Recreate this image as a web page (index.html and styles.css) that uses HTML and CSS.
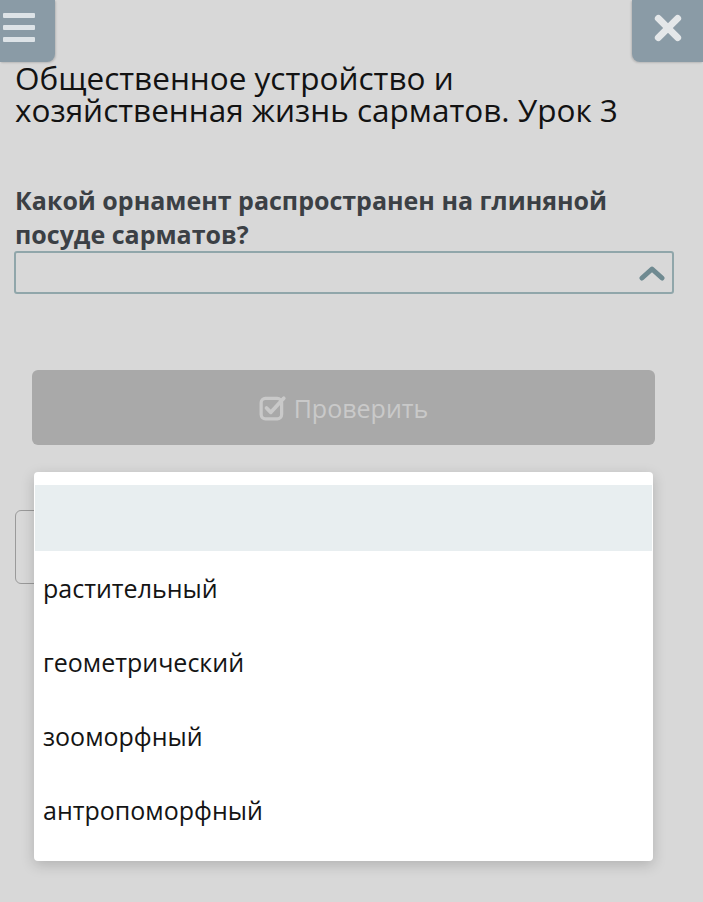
FILE: index.html
```html
<!DOCTYPE html>
<html lang="ru">
<head>
<meta charset="utf-8">
<link rel="stylesheet" href="styles.css">
</head>
<body>
<div class="page">
  <header class="topbar">
    <button class="menu-btn" aria-label="menu">
      <span></span><span></span><span></span>
    </button>
    <button class="close-btn" aria-label="close">
      <svg width="28" height="28" viewBox="0 0 28 28"><path d="M5 5 L23 23 M23 5 L5 23" stroke="#e4e7e9" stroke-width="6.5" stroke-linecap="round"/></svg>
    </button>
  </header>
  <h1 class="title">Общественное устройство и хозяйственная жизнь сарматов. Урок 3</h1>
  <p class="question">Какой орнамент распространен на глиняной посуде сарматов?</p>
  <div class="select">
    <svg class="chev" width="26" height="16" viewBox="0 0 26 16"><path d="M3 13 L13 4 L23 13" fill="none" stroke="#6f8a91" stroke-width="5" stroke-linecap="round" stroke-linejoin="round"/></svg>
  </div>
  <div class="actions">
    <button class="check-btn">
      <svg width="28" height="26" viewBox="0 0 26 24"><rect x="2" y="3" width="19" height="19" rx="4" fill="none" stroke="#c9c9c9" stroke-width="3"/><path d="M7 12 L11 16 L23 3" fill="none" stroke="#c9c9c9" stroke-width="3.5" stroke-linecap="round" stroke-linejoin="round"/></svg>
      <span>Проверить</span>
    </button>
  </div>
  <div class="below">
    <div class="ghost-box"></div>
    <ul class="dropdown">
      <li class="opt active"></li>
      <li class="opt">растительный</li>
      <li class="opt">геометрический</li>
      <li class="opt">зооморфный</li>
      <li class="opt">антропоморфный</li>
    </ul>
  </div>
</div>
</body>
</html>
```
FILE: styles.css
```css
html, body {
  margin: 0;
  padding: 0;
  background: #d8d8d8;
}
body {
  font-family: "Open Sans", "DejaVu Sans", sans-serif;
  color: #141414;
  width: 703px;
  height: 902px;
  overflow: hidden;
}
.page {
  position: relative;
}
.topbar {
  display: flex;
  justify-content: space-between;
  height: 62px;
}
.menu-btn {
  width: 55px;
  height: 62px;
  border: none;
  background: #8a9ba6;
  border-bottom-right-radius: 8px;
  padding: 13px 20px 0 3px;
  display: flex;
  flex-direction: column;
  gap: 7px;
  box-shadow: 1px 1px 2px rgba(0,0,0,0.15);
}
.menu-btn span {
  display: block;
  height: 5px;
  background: #dde3e7;
  border-radius: 1px;
}
.close-btn {
  width: 71px;
  height: 62px;
  border: none;
  background: #8a9ba6;
  border-bottom-left-radius: 8px;
  display: flex;
  align-items: center;
  justify-content: center;
  padding: 0 0 6px 0;
  box-shadow: -1px 1px 2px rgba(0,0,0,0.15);
}
.close-btn svg {
  width: 30px;
  height: 30px;
}
.title {
  margin: 0 0 0 15px;
  font-size: 31.5px;
  font-weight: 400;
  line-height: 32px;
  color: #121212;
  width: 660px;
}
.question {
  margin: 57px 0 0 15px;
  font-size: 25px;
  font-weight: 700;
  line-height: 34px;
  color: #3b4045;
  width: 660px;
}
.select {
  margin: 0 0 0 14px;
  width: 652px;
  height: 39px;
  border: 2px solid #90a6aa;
  border-radius: 3px;
  box-sizing: content-box;
  display: flex;
  align-items: center;
  justify-content: flex-end;
  padding-right: 4px;
}
.chev {
  margin-right: 3px;
}
.actions {
  padding: 76px 48px 0 32px;
}
.check-btn {
  width: 623px;
  height: 75px;
  border: none;
  border-radius: 6px;
  background: #a9a9a9;
  color: #c9c9c9;
  font-family: "Open Sans", sans-serif;
  font-size: 25px;
  display: flex;
  align-items: center;
  justify-content: center;
  gap: 7px;
  padding: 0;
}
.below {
  position: relative;
  height: 460px;
}
.ghost-box {
  position: absolute;
  left: 15px;
  top: 65px;
  width: 600px;
  height: 72px;
  border: 1px solid #9a9a9a;
  border-radius: 6px;
}
.dropdown {
  position: absolute;
  left: 34px;
  top: 27px;
  width: 619px;
  margin: 0;
  padding: 13px 0 14px 0;
  list-style: none;
  background: #fff;
  border-radius: 4px;
  box-shadow: 0 4px 14px rgba(0,0,0,0.18);
}
.opt {
  height: 74px;
  display: flex;
  align-items: center;
  padding-left: 9px;
  font-size: 25px;
  color: #141414;
}
.opt.active {
  height: 66px;
  background: #e8eef0;
  margin: 0 1px;
}
```
